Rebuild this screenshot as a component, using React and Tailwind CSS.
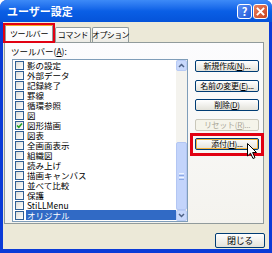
import { useState } from 'react'

const FONT = { fontFamily: '"Noto Sans CJK JP", "Noto Sans", sans-serif' }

const ITEMS = [
  { label: '影の設定' },
  { label: '外部データ' },
  { label: '記録終了' },
  { label: '罫線' },
  { label: '循環参照' },
  { label: '図' },
  { label: '図形描画', checked: true },
  { label: '図表' },
  { label: '全画面表示' },
  { label: '組織図' },
  { label: '読み上げ' },
  { label: '描画キャンバス' },
  { label: '並べて比較' },
  { label: '保護' },
  { label: 'StiLLMenu' },
  { label: 'オリジナル', selected: true },
]

// ─── Title bar buttons ────────────────────────────────────────
function HelpButton() {
  return (
    <div className="w-[15px] h-[15px] rounded-[3px] border border-white bg-gradient-to-br from-[#5a8ff5] to-[#2258d8] flex items-center justify-center text-white text-[11px] font-bold leading-none">
      ?
    </div>
  )
}

function CloseButton() {
  return (
    <div className="w-[15px] h-[15px] rounded-[3px] border border-white bg-gradient-to-br from-[#e9805f] to-[#c7401a] flex items-center justify-center">
      <svg width="9" height="9" viewBox="0 0 9 9">
        <path d="M1.5 1.5 L7.5 7.5 M7.5 1.5 L1.5 7.5" stroke="white" strokeWidth="1.8" strokeLinecap="square" />
      </svg>
    </div>
  )
}

// ─── List row ─────────────────────────────────────────────────
function Row({ item }) {
  return (
    <div className="h-[10px] flex items-center overflow-hidden">
      <div className="w-[9px] h-[9px] ml-[2px] mr-[2px] shrink-0 border border-[#2f5f94] bg-gradient-to-br from-[#dcdcd7] to-white flex items-center justify-center">
        {item.checked && (
          <svg width="7" height="7" viewBox="0 0 7 7">
            <path d="M1 3.5 L2.8 5.3 L6 1.5" stroke="#21a121" strokeWidth="1.5" fill="none" />
          </svg>
        )}
      </div>
      <div className={`flex-1 h-full flex items-center pl-[1px] text-[8.5px] leading-[10px] whitespace-nowrap ${item.selected ? 'bg-[#316ac5] text-white' : 'text-black'}`}>
        {item.label}
      </div>
    </div>
  )
}

// ─── Scrollbar ────────────────────────────────────────────────
function ScrollBar() {
  return (
    <div className="w-[11px] flex flex-col bg-[#f4f3ee]">
      <div className="h-[11px] rounded-[2px] border border-[#b8cbf5] bg-[#c8d8fb] flex items-center justify-center">
        <svg width="7" height="5" viewBox="0 0 7 5"><path d="M1 4 L3.5 1.5 L6 4" stroke="#4d6185" strokeWidth="1.5" fill="none" /></svg>
      </div>
      <div className="flex-1 flex flex-col">
        <div className="h-[71px]" />
        <div className="flex-1 rounded-[2px] border border-[#b3c6f3] bg-[#c3d4fb] flex items-center justify-center">
          <div className="w-[5px] flex flex-col gap-[1px]">
            <div className="h-px bg-[#eef4fe]" />
            <div className="h-px bg-[#8caae6]" />
            <div className="h-px bg-[#eef4fe]" />
            <div className="h-px bg-[#8caae6]" />
          </div>
        </div>
      </div>
      <div className="h-[11px] rounded-[2px] border border-[#b8cbf5] bg-[#c8d8fb] flex items-center justify-center">
        <svg width="7" height="5" viewBox="0 0 7 5"><path d="M1 1 L3.5 3.5 L6 1" stroke="#4d6185" strokeWidth="1.5" fill="none" /></svg>
      </div>
    </div>
  )
}

// ─── Push button ──────────────────────────────────────────────
function Btn({ children, disabled, hot, className = '' }) {
  return (
    <div className={`h-[12px] rounded-[2px] border flex items-center justify-center text-[8px] leading-none whitespace-nowrap tracking-[-0.3px] ${disabled ? 'border-[#c9c7ba] text-[#aca899] bg-[#f5f4ea]' : 'border-[#003c74] text-black bg-gradient-to-b from-white to-[#e3e2da]'} ${hot ? 'shadow-[inset_0_0_0_1px_#f8b33a]' : ''} ${className}`}>
      {children}
    </div>
  )
}

export default function App() {
  const [items] = useState(ITEMS)
  return (
    <div style={FONT} className="relative w-[272px] h-[253px] flex flex-col bg-[#0b3bd7] rounded-t-[7px] overflow-hidden">
      {/* Title bar */}
      <div className="h-[22px] shrink-0 flex items-center justify-between pl-[7px] pr-[4px] bg-gradient-to-b from-[#3d8af7] via-[#0a5fe6] to-[#0553d9]">
        <span className="text-white text-[11px] font-bold leading-none">ユーザー設定</span>
        <div className="flex gap-[1px]">
          <HelpButton />
          <CloseButton />
        </div>
      </div>

      {/* Body */}
      <div className="flex-1 mx-[3px] mb-[4px] bg-[#ece9d8] flex flex-col">
        {/* Tabs */}
        <div className="h-[18px] mt-[2px] ml-[1px] flex items-end">
          <div className="relative h-[18px] w-[48px] ml-[1px] border border-b-0 border-[#919b9c] border-t-[2px] border-t-[#f6a727] bg-[#fcfcfe] flex items-center justify-center text-[8px] leading-none whitespace-nowrap tracking-[-0.4px] z-10">
            ツールバー
            <div className="absolute -left-[3px] -right-[3px] -top-[3px] -bottom-[1px] border-[2px] border-[#e10012]" />
          </div>
          <div className="h-[15px] w-[36px] ml-[2px] border border-b-0 border-[#919b9c] rounded-t-[2px] bg-gradient-to-b from-white to-[#ecebe5] flex items-center justify-center text-[8px] leading-none whitespace-nowrap tracking-[-0.4px]">
            コマンド
          </div>
          <div className="h-[15px] w-[37px] ml-[1px] border border-b-0 border-[#919b9c] rounded-t-[2px] bg-gradient-to-b from-white to-[#ecebe5] flex items-center justify-center text-[8px] leading-none whitespace-nowrap tracking-[-0.6px]">
            オプション
          </div>
        </div>

        {/* Panel */}
        <div className="ml-[1px] w-[260px] h-[182px] border border-[#919b9c] bg-gradient-to-b from-[#fcfcfe] to-[#f4f3ee] flex flex-col pl-[6px]">
          <div className="h-[16px] flex items-center text-[8.5px] leading-none whitespace-nowrap">
            ツールバー(<span className="underline">A</span>):
          </div>
          <div className="flex">
            <div className="w-[176px] h-[163px] ml-[1px] border border-[#7f9db9] bg-white flex">
              <div className="flex-1 flex flex-col">
                {items.map((it) => <Row key={it.label} item={it} />)}
              </div>
              <ScrollBar />
            </div>
            <div className="ml-[7px] w-[64px] flex flex-col gap-[7.5px] pt-[1px]">
              <Btn>新規作成(<span className="underline">N</span>)...</Btn>
              <Btn>名前の変更(<span className="underline">E</span>)...</Btn>
              <Btn>削除(<span className="underline">D</span>)</Btn>
              <Btn disabled>リセット(<span className="underline">R</span>)...</Btn>
              <div className="relative">
                <Btn hot>添付(<span className="underline">H</span>)...</Btn>
                <div className="absolute -left-[5px] -right-[5px] -top-[5px] -bottom-[6px] border-[3px] border-[#e10012]" />
                <svg className="absolute left-[52px] top-[5px]" width="12" height="17" viewBox="0 0 12 17">
                  <path d="M0.5 0.5 L0.5 13 L3.5 10.2 L6 15.5 L8 14.6 L5.6 9.5 L9.5 9.5 Z" fill="white" stroke="black" strokeWidth="1" strokeLinejoin="round" />
                </svg>
              </div>
            </div>
          </div>
        </div>

        {/* Footer */}
        <div className="flex justify-end pr-[4px] mt-[9px]">
          <Btn className="w-[50px] h-[15px] text-[9px]">閉じる</Btn>
        </div>
      </div>
    </div>
  )
}
